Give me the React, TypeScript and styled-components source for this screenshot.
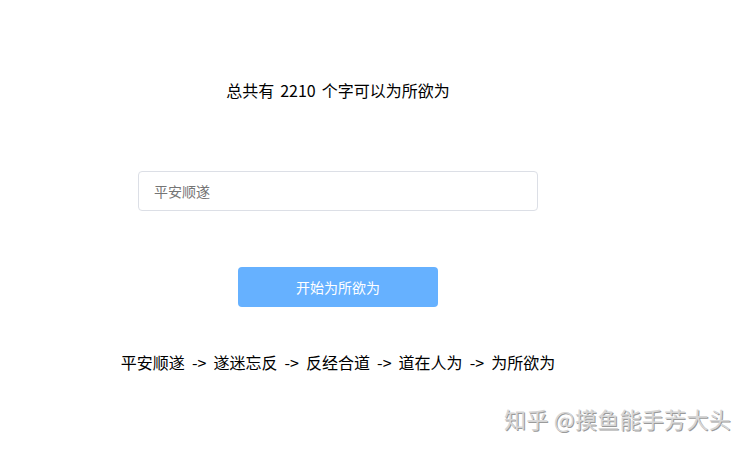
import React, { useState } from "react";
import styled, { createGlobalStyle } from "styled-components";

const Global = createGlobalStyle`
  html, body { margin: 0; padding: 0; background: #fff; }
  body { font-family: "Noto Sans CJK SC", "Noto Sans", sans-serif; color: #000; }
`;

const Page = styled.div`
  position: relative;
  width: 750px;
  height: 451px;
  overflow: hidden;
`;

const Main = styled.div`
  width: 676px;
  display: flex;
  flex-direction: column;
  align-items: center;
  padding-top: 79px;
`;

const Title = styled.div`
  font-size: 16px;
  line-height: 22px;
  height: 22px;
  word-spacing: 2.5px;
`;

const Field = styled.input`
  box-sizing: border-box;
  margin-top: 70px;
  width: 400px;
  height: 40px;
  border: 1px solid #dcdfe6;
  border-radius: 4px;
  padding: 0 15px;
  font-family: inherit;
  font-size: 14px;
  color: #606266;
  outline: none;
  &::placeholder { color: #757575; }
`;

const Action = styled.button`
  margin-top: 56px;
  width: 200px;
  height: 40px;
  border: none;
  border-radius: 4px;
  background: #66b1ff;
  color: #fff;
  font-family: inherit;
  font-size: 14px;
  cursor: pointer;
`;

const Chain = styled.div`
  margin-top: 44px;
  font-size: 16px;
  line-height: 22px;
  word-spacing: 3.5px;
`;

const Watermark = styled.div`
  position: absolute;
  right: 19px;
  top: 404px;
  font-size: 22px;
  line-height: 28px;
  color: #d6d6d6;
  text-shadow: 1px 1px 0 #9a9a9a;
  letter-spacing: 0.3px;
  white-space: nowrap;
`;

export default function App() {
  const [value, setValue] = useState("");
  return (
    <Page>
      <Global />
      <Main>
        <Title>总共有 2210 个字可以为所欲为</Title>
        <Field
          placeholder="平安顺遂"
          value={value}
          onChange={(e) => setValue(e.target.value)}
        />
        <Action>开始为所欲为</Action>
        <Chain>平安顺遂 -&gt; 遂迷忘反 -&gt; 反经合道 -&gt; 道在人为 -&gt; 为所欲为</Chain>
      </Main>
      <Watermark>知乎 @摸鱼能手芳大头</Watermark>
    </Page>
  );
}
